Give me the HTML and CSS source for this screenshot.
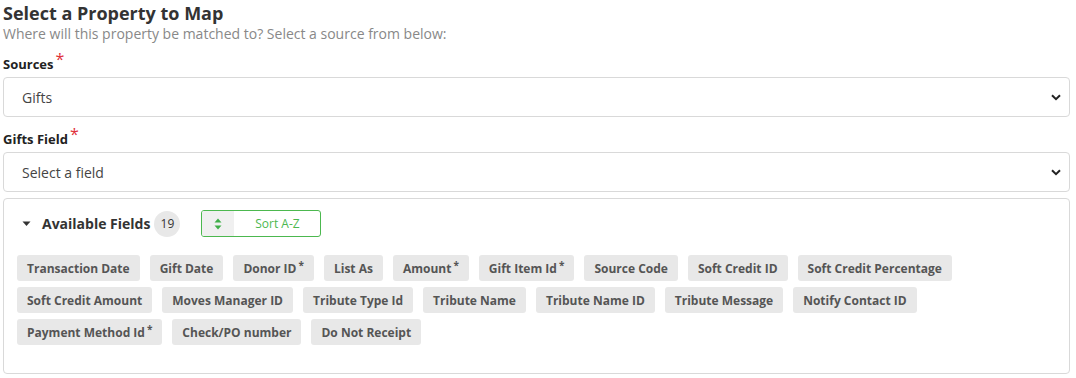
FILE: index.html
```html
<!DOCTYPE html>
<html>
<head>
<meta charset="utf-8">
<link rel="stylesheet" href="styles.css">
</head>
<body>
<div class="page">
  <h2 class="title">Select a Property to Map</h2>
  <p class="subtitle">Where will this property be matched to? Select a source from below:</p>

  <label class="label">Sources<span class="req">*</span></label>
  <div class="select">
    <span>Gifts</span>
    <svg class="chev" width="10" height="7" viewBox="0 0 10 7"><path d="M1 1.2 L5 5.2 L9 1.2" fill="none" stroke="#222" stroke-width="2"/></svg>
  </div>

  <label class="label">Gifts Field<span class="req">*</span></label>
  <div class="select">
    <span>Select a field</span>
    <svg class="chev" width="10" height="7" viewBox="0 0 10 7"><path d="M1 1.2 L5 5.2 L9 1.2" fill="none" stroke="#222" stroke-width="2"/></svg>
  </div>

  <div class="panel">
    <div class="panel-head">
      <svg class="caret" width="9" height="6" viewBox="0 0 9 6"><path d="M0.5 0.5 H8.5 L4.5 5 Z" fill="#333"/></svg>
      <span class="panel-title">Available Fields</span>
      <span class="count">19</span>
      <div class="sort">
        <span class="sort-icon">
          <svg width="8" height="12" viewBox="0 0 8 12"><path d="M4 0.5 L7.5 4.5 H0.5 Z M4 11.5 L7.5 7.5 H0.5 Z" fill="#3fae49"/></svg>
        </span>
        <span class="sort-text">Sort A-Z</span>
      </div>
    </div>
    <div class="chips">
      <span class="chip">Transaction Date</span>
      <span class="chip">Gift Date</span>
      <span class="chip">Donor ID<sup>*</sup></span>
      <span class="chip">List As</span>
      <span class="chip">Amount<sup>*</sup></span>
      <span class="chip">Gift Item Id<sup>*</sup></span>
      <span class="chip">Source Code</span>
      <span class="chip">Soft Credit ID</span>
      <span class="chip">Soft Credit Percentage</span>
      <span class="chip">Soft Credit Amount</span>
      <span class="chip">Moves Manager ID</span>
      <span class="chip">Tribute Type Id</span>
      <span class="chip">Tribute Name</span>
      <span class="chip">Tribute Name ID</span>
      <span class="chip">Tribute Message</span>
      <span class="chip">Notify Contact ID</span>
      <span class="chip">Payment Method Id<sup>*</sup></span>
      <span class="chip">Check/PO number</span>
      <span class="chip">Do Not Receipt</span>
    </div>
  </div>
</div>
</body>
</html>
```

FILE: styles.css
```css
* { box-sizing: border-box; }
html, body { margin: 0; padding: 0; background: #fff; }
body {
  font-family: "Open Sans", "Liberation Sans", sans-serif;
  color: #333;
}
.page {
  width: 1070px;
  padding: 0 0 0 3px;
}
.title {
  margin: 0;
  font-size: 18px;
  font-weight: 700;
  line-height: 24px;
  color: #333;
  padding-top: 1px;
}
.subtitle {
  margin: 0;
  font-size: 14px;
  line-height: 17px;
  color: #888;
}
.label {
  display: block;
  margin-top: 12px;
  font-size: 13px;
  font-weight: 700;
  line-height: 18px;
  color: #222;
}
.req {
  color: #e0303a;
  font-size: 16px;
  font-weight: 400;
  position: relative;
  top: -4px;
  margin-left: 2px;
}
.select {
  margin-top: 4px;
  height: 40px;
  border: 1px solid #d9d9d9;
  border-radius: 4px;
  display: flex;
  align-items: center;
  justify-content: space-between;
  padding: 0 8px 0 18px;
  font-size: 14px;
  color: #444;
}
.chev { display: block; }
.panel {
  margin-top: 6px;
  border: 1px solid #d9d9d9;
  border-radius: 4px;
  height: 176px;
  padding: 11px 13px 0 13px;
}
.panel-head {
  display: flex;
  align-items: center;
  height: 27px;
}
.caret { margin-left: 5px; margin-right: 11px; }
.panel-title {
  font-size: 14px;
  font-weight: 700;
  color: #333;
}
.count {
  margin-left: 4px;
  width: 26px;
  height: 26px;
  border-radius: 50%;
  background: #e8e8e8;
  display: inline-flex;
  align-items: center;
  justify-content: center;
  font-size: 12px;
  color: #333;
}
.sort {
  margin-left: 21px;
  width: 120px;
  height: 27px;
  border: 1px solid #4cb84f;
  border-radius: 3px;
  display: flex;
  overflow: hidden;
}
.sort-icon {
  width: 32px;
  background: #f0f0f0;
  display: flex;
  align-items: center;
  justify-content: center;
}
.sort-text {
  flex: 1;
  display: flex;
  align-items: center;
  justify-content: center;
  font-size: 12px;
  color: #4cb84f;
}
.chips {
  margin-top: 18px;
  display: flex;
  flex-wrap: wrap;
  gap: 6px 10px;
}
.chip {
  height: 26px;
  padding: 0 10px;
  background: #e8e8e8;
  border-radius: 3px;
  font-size: 12px;
  font-weight: 700;
  color: #555;
  display: inline-flex;
  align-items: center;
  white-space: nowrap;
}
.chip sup {
  font-size: 10px;
  line-height: 0;
  position: relative;
  top: -3px;
  margin-left: 2px;
  vertical-align: baseline;
}
```
